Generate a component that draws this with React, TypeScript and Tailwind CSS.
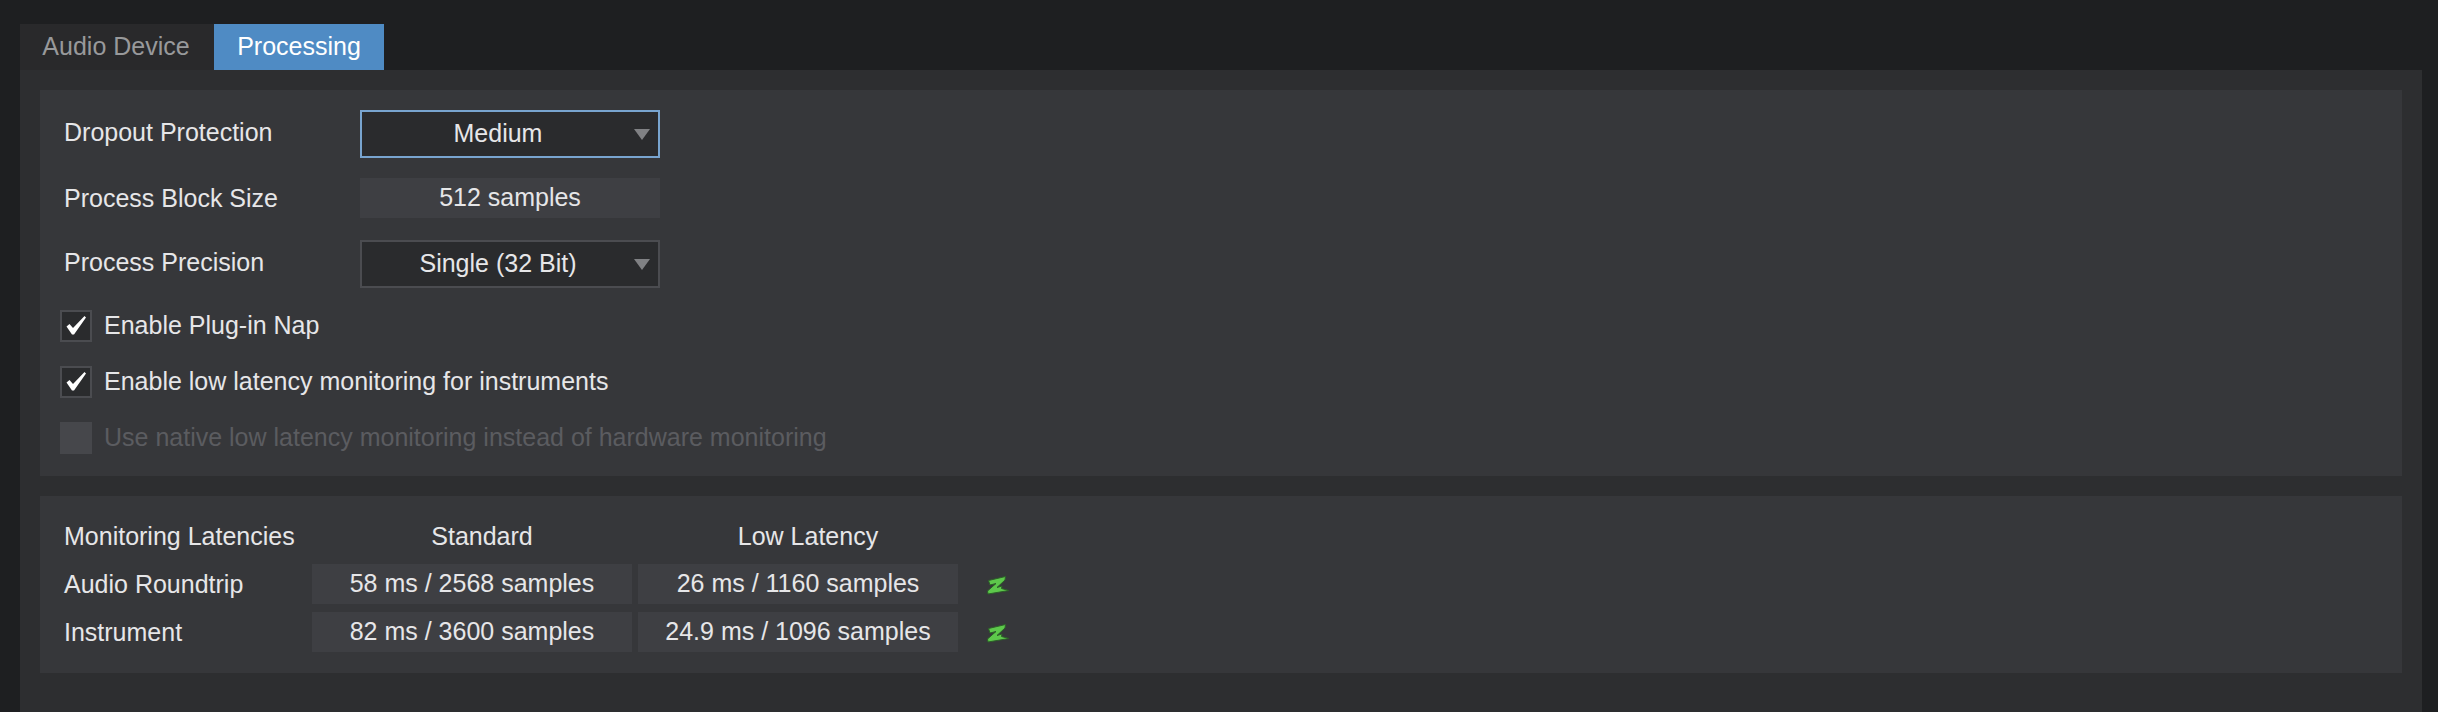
const FONT = "font-['Liberation_Sans',Arial,sans-serif]";

function SelectBox({ value, focused }: { value: string; focused?: boolean }) {
  return (
    <div
      className={`flex h-[48px] w-[300px] items-center bg-[#2a2b2d] border-2 ${
        focused ? 'border-[#78a4cf]' : 'border-[#4b4c50]'
      }`}
    >
      <span className="flex-1 text-center">{value}</span>
      <svg width="16" height="11" viewBox="0 0 16 11" className="mr-[8px] shrink-0">
        <polygon points="0,0 16,0 8,11" fill="#808184" />
      </svg>
    </div>
  );
}

function Check({ label, checked, disabled }: { label: string; checked?: boolean; disabled?: boolean }) {
  return (
    <div className="flex h-[32px] items-center gap-[12px]">
      <div
        className={`flex h-[32px] w-[32px] items-center justify-center border-2 ${
          disabled ? 'bg-[#46474b] border-[#46474b]' : 'bg-[#2a2b2d] border-[#4b4c50]'
        }`}
      >
        {checked && (
          <svg width="22" height="22" viewBox="0 0 22 22">
            <path d="M1.5 11.5 L4.5 9 L8 13 L19.5 1 L21 2.5 L9 19.5 L7 19.5 Z" fill="#ffffff" />
          </svg>
        )}
      </div>
      <span className={disabled ? 'text-[#5b5c60]' : ''}>{label}</span>
    </div>
  );
}

function Zap() {
  return (
    <svg width="24" height="22" viewBox="0 0 24 22">
      <path
        d="M2.5 7.5 L19.5 3.5 L19 7 L11 14.5 L16 13 L15.5 15.5 L23 17.5 L2 21 L1.5 18 L10 10.5 L4 12 Z"
        fill="#5dc84b"
        stroke="#2c5f28"
        strokeWidth="1"
      />
    </svg>
  );
}

function LatencyRow({ label, standard, low }: { label: string; standard: string; low: string }) {
  return (
    <div className="flex h-[40px] items-center">
      <span className="w-[248px] pt-[2px]">{label}</span>
      <div className="flex h-full w-[320px] items-center justify-center bg-[#3e3f43]">{standard}</div>
      <div className="ml-[6px] flex h-full w-[320px] items-center justify-center bg-[#3e3f43]">{low}</div>
      <div className="ml-[28px] flex">
        <Zap />
      </div>
    </div>
  );
}

export default function App() {
  return (
    <div className={`${FONT} h-[712px] w-[2438px] overflow-hidden bg-[#1e1f21] pl-[20px] pr-[16px] pt-[24px] text-[25px] text-[#e6e6e8]`}>
      {/* Tabs */}
      <div className="flex h-[46px]">
        <div className="flex w-[194px] items-center justify-center bg-[#29292b] pr-[2px] text-[#98999b]">
          Audio Device
        </div>
        <div className="flex w-[170px] items-center justify-center bg-[#4f8bc4] text-white">Processing</div>
      </div>

      <div className="h-[642px] bg-[#2d2e30] px-[20px] pt-[20px]">
        {/* Processing settings */}
        <div className="bg-[#36373a] pl-[20px] pt-[20px] pb-[22px]">
          <div className="flex items-center">
            <span className="ml-[4px] w-[296px] pb-[2px]">Dropout Protection</span>
            <SelectBox value="Medium" focused />
          </div>
          <div className="mt-[20px] flex items-center">
            <span className="ml-[4px] w-[296px] pt-[2px]">Process Block Size</span>
            <div className="flex h-[40px] w-[300px] items-center justify-center bg-[#3e3f43]">512 samples</div>
          </div>
          <div className="mt-[22px] flex items-center">
            <span className="ml-[4px] w-[296px] pb-[2px]">Process Precision</span>
            <SelectBox value="Single (32 Bit)" />
          </div>
          <div className="mt-[22px] flex flex-col gap-[24px]">
            <Check label="Enable Plug-in Nap" checked />
            <Check label="Enable low latency monitoring for instruments" checked />
            <Check label="Use native low latency monitoring instead of hardware monitoring" disabled />
          </div>
        </div>

        {/* Monitoring latencies */}
        <div className="mt-[20px] bg-[#36373a] pl-[24px] pt-[26px] pb-[21px]">
          <div className="mb-[12px] flex h-[30px] items-center">
            <span className="w-[248px]">Monitoring Latencies</span>
            <span className="w-[320px] pl-[20px] text-center">Standard</span>
            <span className="ml-[6px] w-[320px] pl-[20px] text-center">Low Latency</span>
          </div>
          <div className="flex flex-col gap-[8px]">
            <LatencyRow label="Audio Roundtrip" standard="58 ms / 2568 samples" low="26 ms / 1160 samples" />
            <LatencyRow label="Instrument" standard="82 ms / 3600 samples" low="24.9 ms / 1096 samples" />
          </div>
        </div>
      </div>
    </div>
  );
}
